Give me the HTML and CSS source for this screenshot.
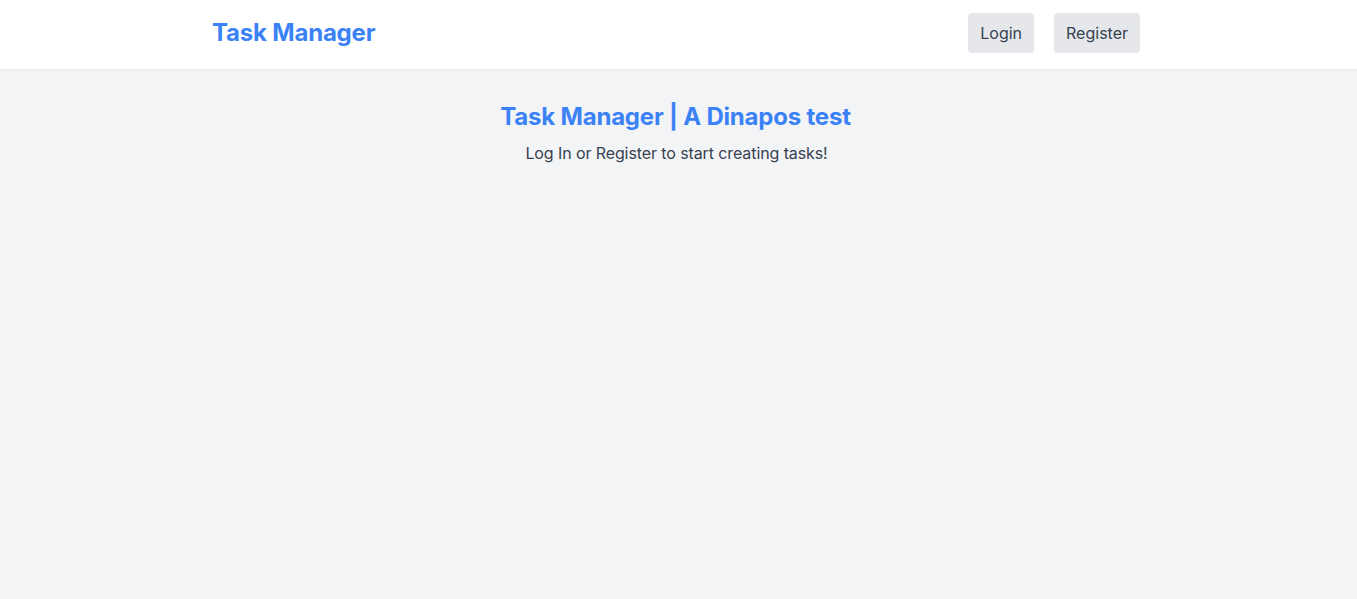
FILE: index.html
```html
<!DOCTYPE html>
<html lang="en">
<head>
<meta charset="utf-8">
<title>Task Manager</title>
<link rel="stylesheet" href="styles.css">
</head>
<body>
<header class="header">
  <div class="header-inner">
    <a class="logo" href="#">Task Manager</a>
    <nav class="nav">
      <a class="btn" href="#">Login</a>
      <a class="btn" href="#">Register</a>
    </nav>
  </div>
</header>
<main class="main">
  <h1 class="title">Task Manager | A Dinapos test</h1>
  <p class="subtitle">Log In or Register to start creating tasks!</p>
</main>
</body>
</html>
```

FILE: styles.css
```css
* { box-sizing: border-box; }
html, body { margin: 0; padding: 0; }
body {
  font-family: "Inter", "Noto Sans", sans-serif;
  background: #f3f4f6;
  color: #374151;
  min-height: 599px;
}
.header {
  background: #ffffff;
  box-shadow: 0 1px 1px rgba(0,0,0,0.03);
}
.header-inner {
  margin: 0 auto;
  padding: 13px 217px 16px 212px;
  display: flex;
  align-items: center;
  justify-content: space-between;
}
.logo {
  font-size: 24px;
  line-height: 32px;
  font-weight: 700;
  color: #3b82f6;
  text-decoration: none;
  letter-spacing: -0.2px;
}
.nav {
  display: flex;
  gap: 20px;
}
.btn {
  display: block;
  background: #e5e7eb;
  color: #374151;
  text-decoration: none;
  font-size: 16px;
  line-height: 24px;
  padding: 8px 12px;
  border-radius: 4px;
}
.main {
  text-align: center;
  padding-top: 32px;
}
.title {
  margin: 0 6px 0 0;
  font-size: 24px;
  line-height: 32px;
  font-weight: 700;
  color: #3b82f6;
  letter-spacing: -0.2px;
}
.subtitle {
  margin: 8px 4px 0 0;
  font-size: 16px;
  line-height: 24px;
  color: #374151;
  letter-spacing: -0.1px;
}
```
